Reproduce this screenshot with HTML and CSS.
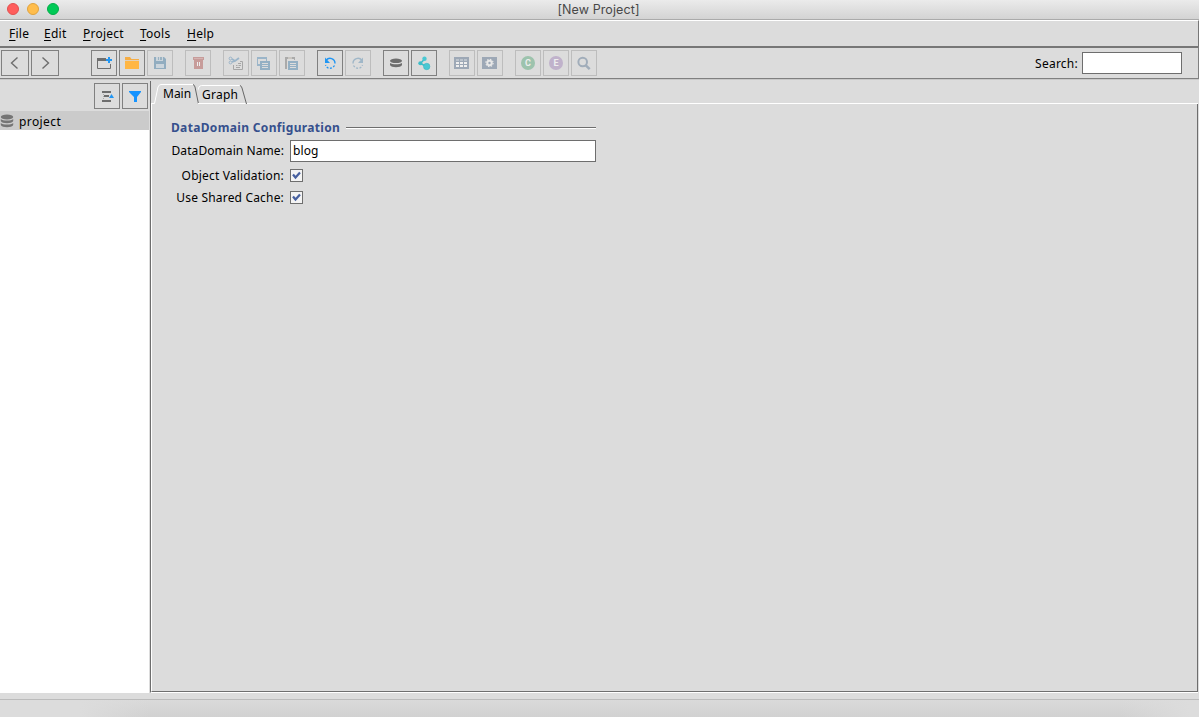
FILE: index.html
```html
<!DOCTYPE html>
<html lang="en">
<head>
  <meta charset="UTF-8">
  <title>[New Project]</title>
  <link rel="stylesheet" href="styles.css">
</head>
<body>

<div class="window">
  <header class="titlebar">
    <div class="lights">
      <span class="light red"></span>
      <span class="light yellow"></span>
      <span class="light green"></span>
    </div>
    <span class="title">[New Project]</span>
  </header>

  <nav class="menubar">
    <a class="menu-file"><u>F</u>ile</a>
    <a class="menu-edit"><u>E</u>dit</a>
    <a class="menu-project"><u>P</u>roject</a>
    <a class="menu-tools"><u>T</u>ools</a>
    <a class="menu-help"><u>H</u>elp</a>
  </nav>

  <div class="toolbar">
    <div class="group nav-group">
      <button class="tool wide" aria-label="Back"><svg width="26" height="24" viewBox="0 0 26 24"><path d="M15.5 6.5 L9.5 12 L15.5 17.5" fill="none" stroke="#6e6e6e" stroke-width="1.4"/></svg></button>
      <button class="tool wide" aria-label="Forward"><svg width="26" height="24" viewBox="0 0 26 24"><path d="M10.500 6.5 L16.5 12 L10.5 17.5" fill="none" stroke="#6e6e6e" stroke-width="1.4"/></svg></button>
    </div>

    <div class="group">
      <button class="tool" aria-label="New"><svg width="24" height="24" viewBox="0 0 24 24"><path d="M5 7h9v3H5z" fill="#6e6e6e"/><path d="M5.5 9v8.500h13V13" fill="none" stroke="#6e6e6e"/><path d="M14 9h6M17 6v6" stroke="#2196f3" stroke-width="2"/></svg></button>
      <button class="tool" aria-label="Open"><svg width="24" height="24" viewBox="0 0 24 24"><path d="M5 6h5l1.500 2H19v1.300H5z" fill="#f5ad45"/><path d="M5 10h14v8H5z" fill="#ffb643"/></svg></button>
      <button class="tool" aria-label="Save" disabled><svg width="24" height="24" viewBox="0 0 24 24"><path d="M6 6h10l2 2v10H6z" fill="#92adc0"/><path d="M8 6h7v4H8zM8 13h8v4H8z" fill="#ccd5dc"/><path d="M10 6h1v3h-1zM12 6h2v3h-2z" fill="#9bb3c2"/></svg></button>
    </div>

    <div class="group">
      <button class="tool" aria-label="Remove" disabled><svg width="24" height="24" viewBox="0 0 24 24"><path d="M7 6h11v3H7zM8 9h9v9H8z" fill="#c79c9a"/><path d="M8 7.500h9" stroke="#d5b3b1"/><path d="M11.500 11v4M13.500 11v4" stroke="#eee"/></svg></button>
    </div>

    <div class="group">
      <button class="tool" aria-label="Cut" disabled><svg width="24" height="24" viewBox="0 0 24 24"><path d="M8 8l3 2 4-3M8 11l3-1" fill="none" stroke="#9bb5c9" stroke-width="1.800"/><circle cx="6.500" cy="7.500" r="1.400" fill="none" stroke="#9bb5c9"/><circle cx="6.500" cy="11.500" r="1.400" fill="none" stroke="#9bb5c9"/><path d="M9.500 14v4.500h9v-8H16M14 12.500h3M12 14.500h1.500M14.500 14.500h2.500M12 16.500h4" fill="none" stroke="#a6a6a6"/></svg></button>
      <button class="tool" aria-label="Copy" disabled><svg width="24" height="24" viewBox="0 0 24 24"><path d="M5 6h10v4h-1V8H6v5h2v2H5z" fill="#9bb5c9"/><path d="M8 10h10v9H8z" fill="#94b0c4"/><path d="M10 12.500h6M10 14.500h6M10 16.500h6" stroke="#dcdcdc"/></svg></button>
      <button class="tool" aria-label="Paste" disabled><svg width="24" height="24" viewBox="0 0 24 24"><path d="M5 6h2v12H5zM7 6h8v3h-1V8H7z" fill="#aaa"/><path d="M8 6h4v2H8z" fill="#c8c5c0"/><path d="M8 10h10v9H8z" fill="#94b0c4"/><path d="M10 12.500h6M10 14.500h6M10 16.500h6" stroke="#dcdcdc"/></svg></button>
    </div>

    <div class="group">
      <button class="tool" aria-label="Undo"><svg width="24" height="24" viewBox="0 0 24 24"><path d="M8 9.500C11 5.500 17 7.500 17 12.500" fill="none" stroke="#2196f3" stroke-width="1.400"/><path d="M7 6.500v5.500h5z" fill="#2196f3"/><path d="M16.500 14.500C14 18.500 9 18 7.500 14" fill="none" stroke="#2196f3" stroke-width="1.300" stroke-dasharray="2 1.500"/></svg></button>
      <button class="tool" aria-label="Redo" disabled><svg width="24" height="24" viewBox="0 0 24 24"><path d="M16 9.500C13 5.500 7 7.500 7 12.500" fill="none" stroke="#a0b7c8" stroke-width="1.400"/><path d="M17 6.500v5.500h-5z" fill="#a0b7c8"/><path d="M7.500 14.500C10 18.500 15 18 16.500 14" fill="none" stroke="#a0b7c8" stroke-width="1.300" stroke-dasharray="2 1.500"/></svg></button>
    </div>

    <div class="group">
      <button class="tool" aria-label="DataNode"><svg width="24" height="24" viewBox="0 0 24 24"><ellipse cx="12" cy="9.800" rx="6" ry="2.300" fill="#6e6e6e"/><path d="M6 12c2 1.800 10 1.800 12 0v2c-1 3-11 3-12 0z" fill="#6e6e6e"/></svg></button>
      <button class="tool" aria-label="DataMap"><svg width="24" height="24" viewBox="0 0 24 24"><path d="M12.500 8L8.500 12.500 14.500 15.500" fill="none" stroke="#3bbdc9" stroke-width="1.500"/><circle cx="12.500" cy="7.700" r="2.200" fill="#4ac8d3"/><circle cx="8.300" cy="12.300" r="2" fill="#3bbdc9"/><circle cx="14.700" cy="15.500" r="3.200" fill="#4ac8d3" stroke="#3bb5c0" stroke-width=".6"/></svg></button>
    </div>

    <div class="group">
      <button class="tool" aria-label="Table" disabled><svg width="24" height="24" viewBox="0 0 24 24"><path d="M4 6h15v12H4z" fill="#9da8b6"/><path d="M6 8h3v2H6zM10 8h3v2h-3zM14 8h3v2h-3z" fill="#bcc4cd"/><path d="M6 11h3v2H6zM10 11h3v2h-3zM14 11h3v2h-3zM6 14h3v2H6zM10 14h3v2h-3zM14 14h3v2h-3z" fill="#eee"/></svg></button>
      <button class="tool" aria-label="Procedure" disabled><svg width="24" height="24" viewBox="0 0 24 24"><path d="M4 6h15v12H4z" fill="#9da8b6"/><circle cx="11.500" cy="12" r="2.200" fill="none" stroke="#e8e8e8" stroke-width="2"/><circle cx="11.500" cy="12" r="3.600" fill="none" stroke="#e8e8e8" stroke-width="1.200" stroke-dasharray="1.413 1.413"/></svg></button>
    </div>

    <div class="group">
      <button class="tool" aria-label="Class" disabled><span class="badge entity">C</span></button>
      <button class="tool" aria-label="Embeddable" disabled><span class="badge embeddable">E</span></button>
      <button class="tool" aria-label="Query" disabled><svg width="24" height="24" viewBox="0 0 24 24"><circle cx="10.700" cy="11" r="4.300" fill="none" stroke="#a1adba" stroke-width="2"/><path d="M13.800 14.300l3.900 3.900" stroke="#a1adba" stroke-width="2.500"/></svg></button>
    </div>

    <label class="search"><span>Search:</span><input type="text"></label>
  </div>

  <main class="content">
    <aside class="sidebar">
      <div class="side-tools">
        <button class="tool" aria-label="Collapse"><svg width="24" height="24" viewBox="0 0 24 24"><path d="M7 7h9v2H7zM7 16h9v2H7zM9 11h5v2H9z" fill="#6e6e6e"/><path d="M8.500 10v6" stroke="#aaa" stroke-dasharray="1 1"/><path d="M14 14l2.500-4 2.500 4z" fill="#2196f3"/></svg></button>
        <button class="tool" aria-label="Filter"><svg width="24" height="24" viewBox="0 0 24 24"><path d="M6 7h12v1l-4 5v5h-3v-5L6 8z" fill="#1593ff"/></svg></button>
      </div>
      <div class="tree">
        <div class="tree-row">
          <svg width="14" height="14" viewBox="0 0 14 14"><ellipse cx="7" cy="3" rx="6.200" ry="2.500" fill="#757575"/><path d="M.8 5c2 2 10.400 2 12.400 0v2c-1 3-11.400 3-12.400 0zM.8 9c2 2 10.400 2 12.400 0v2c-1 3-11.400 3-12.400 0z" fill="#757575"/></svg>
          <span>project</span>
        </div>
      </div>
    </aside>

    <section class="editor">
      <div class="tabs">
        <div class="tab tab-main">
          <svg width="48" height="23" viewBox="0 0 48 23"><path d="M0 22.500h3.500L7 6q1-2.500 3-2.500h32" fill="none" stroke="#fff"/><path d="M42 3.500q1.500.5 2 2.500l3.500 17" fill="none" stroke="#666"/></svg>
          <span>Main</span>
        </div>
        <div class="tab tab-graph">
          <svg width="50" height="23" viewBox="0 0 50 23"><path d="M-.5 10l1-3q1-2.500 3-2.500h38" fill="none" stroke="#fff"/><path d="M42 4.500q1.500.5 2 2.500l4.500 16" fill="none" stroke="#666"/></svg>
          <span>Graph</span>
        </div>
        <div class="tab-line"></div>
      </div>

      <form class="panel">
        <div class="section-title"><h2>DataDomain Configuration</h2><hr></div>
        <div class="row row-name"><label for="name">DataDomain Name:</label><input type="text" id="name" value="blog"></div>
        <div class="row row-check"><label>Object Validation:</label><span class="check"><svg width="11" height="11" viewBox="0 0 11 11"><path d="M2 4.500l2.500 3L9 2.500" fill="none" stroke="#4760a0" stroke-width="2.200"/></svg></span></div>
        <div class="row row-check"><label>Use Shared Cache:</label><span class="check"><svg width="11" height="11" viewBox="0 0 11 11"><path d="M2 4.500l2.500 3L9 2.500" fill="none" stroke="#4760a0" stroke-width="2.200"/></svg></span></div>
      </form>
    </section>
  </main>

  <footer class="statusbar"></footer>
</div>

</body>
</html>
```
FILE: styles.css
```css
* {
  box-sizing: border-box;
}

body {
  margin: 0;
  font-family: "Noto Sans", "Open Sans", sans-serif;
  font-size: 12px;
  letter-spacing: 0.25px;
  color: #000;
  background: #dcdcdc;
}

svg {
  display: block;
}

.window {
  display: flex;
  flex-direction: column;
  width: 1199px;
  height: 717px;
  overflow: hidden;
}

/* title bar */
.titlebar {
  position: relative;
  height: 20px;
  padding-right: 2px;
  background: linear-gradient(#ebebeb, #d3d3d3);
  border-bottom: 1px solid #aaa;
  text-align: center;
}

.lights {
  position: absolute;
  left: 7px;
  top: 3px;
  display: flex;
  gap: 8px;
}

.light {
  width: 12px;
  height: 12px;
  border-radius: 50%;
}

.red {
  background: #ff5d5c;
  border: 1px solid #e2504f;
}

.yellow {
  background: #ffbd4c;
  border: 1px solid #e0a33e;
}

.green {
  background: #00ca56;
  border: 1px solid #03ad48;
}

.title {
  font-family: Inter, sans-serif;
  font-size: 12.5px;
  line-height: 19px;
  letter-spacing: 0.1px;
  color: #484848;
}

/* menu */
.menubar {
  display: flex;
  height: 26px;
  padding-left: 9px;
  line-height: 26px;
  border-top: 1px solid #fff;
  border-right: 1px solid #777;
}

.menubar a {
  white-space: nowrap;
}

.menubar u {
  text-underline-offset: 2px;
}

.menu-file {
  width: 35px;
}

.menu-edit {
  width: 39px;
}

.menu-project {
  width: 57px;
}

.menu-tools {
  width: 47px;
}

/* toolbar */
.toolbar {
  display: flex;
  height: 33px;
  padding: 2px 16px 0 1px;
  gap: 12px;
  border-top: 2px solid #777;
  border-bottom: 1px solid #808080;
  border-right: 1px solid #808080;
}

.group {
  display: flex;
  gap: 2px;
}

.nav-group {
  margin-right: 20px;
}

.tool {
  width: 26px;
  height: 26px;
  margin: 0;
  padding: 0;
  border: 1px solid #808080;
  background: none;
}

.tool.wide {
  width: 28px;
}

.tool:disabled {
  border-color: #bdbdbd;
}

.badge {
  display: block;
  width: 14px;
  height: 14px;
  margin: 0 auto;
  border-radius: 50%;
  font: bold 9px/14px Roboto, sans-serif;
  color: #eee;
}

.entity {
  background: #9dc3ad;
}

.embeddable {
  background: #c0b2cb;
}

.search {
  display: flex;
  margin-left: auto;
  gap: 4px;
  line-height: 28px;
}

.search input {
  width: 100px;
  height: 22px;
  margin: 2px 0 0;
  border: 1px solid #6e6e6e;
}

/* content */
.content {
  display: flex;
  height: 614px;
  border-top: 1px solid #c8c8c8;
}

.sidebar {
  display: flex;
  flex-direction: column;
  width: 149px;
}

.side-tools {
  display: flex;
  justify-content: flex-end;
  gap: 2px;
  height: 31px;
  padding: 3px 1px 0 0;
}

.tree {
  flex: 1;
  background: #fff;
}

.tree-row {
  display: flex;
  align-items: center;
  gap: 5px;
  height: 19px;
  background: #cbcbcb;
}

.tree-row span {
  padding-top: 2px;
  line-height: 19px;
  letter-spacing: 0.4px;
}

.editor {
  flex: 1;
  margin: 1px 1px 0;
  border-left: 1px solid #6e6e6e;
  border-bottom: 1px solid #fff;
}

.tabs {
  display: flex;
  height: 23px;
}

.tab {
  position: relative;
}

.tab svg {
  position: absolute;
  left: 0;
  top: 0;
}

.tab span {
  position: relative;
}

.tab-main {
  width: 47px;
  padding-left: 12px;
  line-height: 25px;
  letter-spacing: 0;
}

.tab-graph {
  width: 49px;
  padding-left: 4px;
  line-height: 27px;
  border-bottom: 1px solid #fff;
}

.tab-line {
  flex: 1;
  border-bottom: 1px solid #fff;
}

.panel {
  height: 588px;
  margin: 0;
  padding: 15px 0 0 19px;
  border-left: 1px solid #fff;
  border-right: 1px solid #6e6e6e;
  border-bottom: 1px solid #6e6e6e;
}

.section-title {
  display: flex;
  align-items: center;
  width: 425px;
  height: 17px;
}

.section-title h2 {
  width: 175px;
  margin: 0;
  font-size: 12px;
  line-height: 17px;
  letter-spacing: 0.34px;
  white-space: nowrap;
  color: #36508d;
}

.section-title hr {
  flex: 1;
  height: 2px;
  margin: 0;
  border: 0;
  border-top: 1px solid #6e6e6e;
  background: #fff;
}

.row {
  display: flex;
  align-items: center;
  gap: 6px;
}

.row label {
  width: 113px;
  text-align: right;
  white-space: nowrap;
  letter-spacing: 0.18px;
}

.row-name {
  height: 22px;
  margin: 4px 0 2px;
}

.row-name label {
  padding-bottom: 2px;
  letter-spacing: 0.08px;
}

.row-name input {
  width: 306px;
  height: 22px;
  padding: 0 2px 2px;
  border: 1px solid #6e6e6e;
  font: inherit;
  letter-spacing: 0.1px;
}

.row-check {
  height: 22px;
}

.check {
  width: 13px;
  height: 13px;
  border: 1px solid #6e6e6e;
  background: #f4f4f4;
}

.statusbar {
  flex: 1;
  margin-top: 6px;
  border-top: 1px solid #bbb;
  background: linear-gradient(90deg, #dcdcdc 80px, transparent 150px, transparent 1120px, #dcdcdc 1190px), linear-gradient(#dadada, #d1d1d1);
}
```
